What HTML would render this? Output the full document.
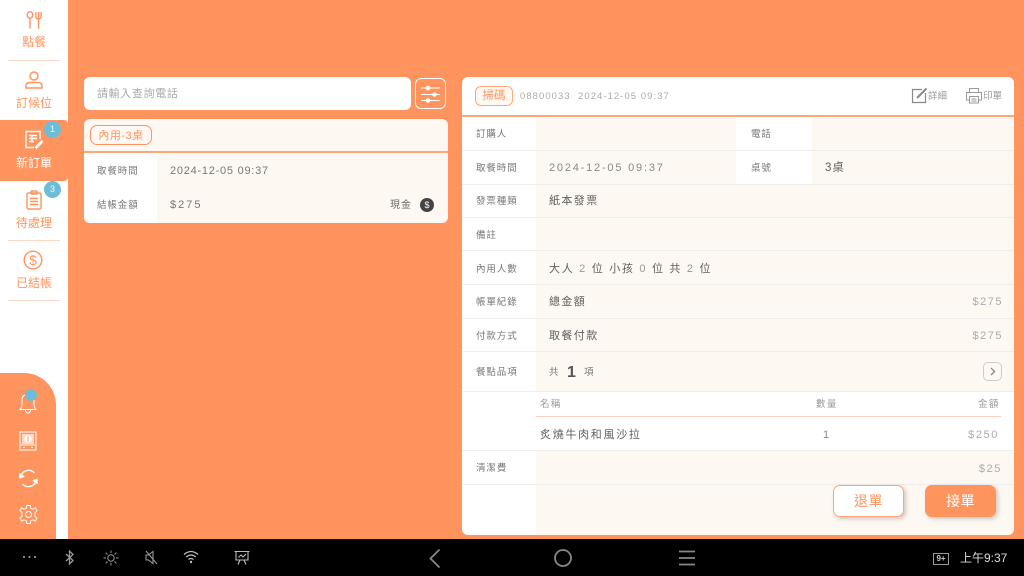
<!DOCTYPE html>
<html><head><meta charset="utf-8">
<style>
*{margin:0;padding:0;box-sizing:border-box}
html,body{width:1024px;height:576px;overflow:hidden;background:#ff945f}
body{position:relative;font-family:"Liberation Sans","Noto Sans CJK TC",sans-serif}
.a{position:absolute;white-space:nowrap}
.sep{position:absolute;left:8px;width:52px;height:1px;background:#fbd9c8}
.nav{position:absolute;left:0;width:68px;text-align:center;font-size:12px;color:#ff945f;line-height:18px}
.lb{position:absolute;left:476px;font-size:9.5px;color:#777;letter-spacing:.9px;line-height:14px;white-space:nowrap}
.v{position:absolute;font-size:11px;color:#5f5f5f;letter-spacing:1.4px;line-height:16px;white-space:nowrap}
.rl{position:absolute;left:462px;width:552px;height:1px;background:#f0eeec}
.badge{position:absolute;width:17px;height:17px;border-radius:50%;background:#6fbcd6;color:#dff;font-size:9px;text-align:center;line-height:17px}
svg{position:absolute;fill:none}
</style></head><body>
<!-- sidebar -->
<div class="a" style="left:0;top:0;width:68px;height:539px;background:#fff"></div>
<div class="a" style="left:0;top:120px;width:68px;height:61px;background:#ff945f;border-radius:0 4px 4px 0"></div>
<div class="a" style="left:0;top:373px;width:56px;height:166px;background:#ff945f;border-radius:0 32px 0 0"></div>
<svg style="left:26px;top:11px" width="17" height="18" viewBox="0 0 17 18" stroke="#ff945f" stroke-width="1.4"><ellipse cx="4" cy="4" rx="2.8" ry="3.3"/><path d="M4 7.300V17.500M9.800 1V5.500Q9.800 7.800 12.500 7.800Q15.200 7.800 15.200 5.500V1M12.500 1V17.500"/></svg>
<div class="nav" style="top:33px">點餐</div>
<div class="sep" style="top:60px"></div>
<svg style="left:24px;top:71px" width="20" height="18" viewBox="0 0 20 18" stroke="#ff945f" stroke-width="1.5"><circle cx="10" cy="5" r="4"/><path d="M2 17V15Q2 11.500 6 11.500H14Q18 11.500 18 15V17Z"/></svg>
<div class="nav" style="top:94px">訂候位</div>
<svg style="left:24px;top:130px" width="20" height="20" viewBox="0 0 20 20" stroke="#fff" stroke-width="1.400"><path d="M16 9V1.500H2V17.500H10"/><path d="M5 5.500H13M5 8.500H13M5 11.500H10M8 5.500V12.500"/><path d="M11.500 18L18.500 11" stroke-width="2.800"/></svg>
<div class="nav" style="top:154px;color:#fff">新訂單</div>
<div class="badge" style="left:44px;top:121px">1</div>
<svg style="left:25px;top:190px" width="18" height="20" viewBox="0 0 18 20" stroke="#ff945f" stroke-width="1.400"><rect x="2" y="3" width="14" height="16" rx="1.500"/><rect x="6" y="1" width="6" height="3" rx="1"/><path d="M5 8.500H13M5 11.500H13M5 14.500H13"/></svg>
<div class="nav" style="top:214px">待處理</div>
<div class="badge" style="left:44px;top:181px">3</div>
<div class="sep" style="top:240px"></div>
<svg style="left:23px;top:250px" width="20" height="20" viewBox="0 0 20 20" stroke="#ff945f" stroke-width="1.400"><circle cx="10" cy="10" r="8.800"/></svg>
<div class="a" style="left:23px;top:250px;width:20px;text-align:center;font-size:14px;line-height:20px;color:#ff945f">$</div>
<div class="nav" style="top:274px">已結帳</div>
<div class="sep" style="top:300px"></div>
<svg style="left:18px;top:391px" width="22" height="23" viewBox="0 0 22 23" stroke="#fff" stroke-width="1"><path d="M2 18.500H18Q16 16.500 16 12V9Q16 3.500 10 3.500Q4 3.500 4 9V12Q4 16.500 2 18.500ZM7.500 18.500Q7.500 22 10 22Q12.500 22 12.500 18.500"/></svg>
<div class="a" style="left:25px;top:389px;width:12px;height:12px;border-radius:50%;background:#6fbcd6"></div>
<svg style="left:19px;top:431px" width="18" height="20" viewBox="0 0 18 20" stroke="#fff" stroke-width="1"><rect x="1" y="1" width="16" height="18"/><rect x="3" y="3" width="12" height="10" fill="#ffd9c4" stroke="none"/><path d="M1 14H17M4 16.500H6M12 16.500H14"/><circle cx="9" cy="8" r="3.600" fill="#fff" stroke="none"/><path d="M9 5.500V10.500" stroke="#ff945f"/></svg>
<svg style="left:18px;top:468px" width="21" height="21" viewBox="0 0 21 21" stroke="#fff" stroke-width="1.400"><path d="M2.900 8A8 8 0 0 1 16.500 5M18.100 13A8 8 0 0 1 4.500 16"/><path d="M1.500 5L6.500 8.500L1.500 10.500Z M19.500 16L14.500 12.500L19.500 10.500Z" fill="#fff" stroke-width=".5"/></svg>
<svg style="left:18px;top:504px" width="21" height="21" viewBox="0 0 21 21" stroke="#fff" stroke-width="1"><circle cx="10.500" cy="10.500" r="3"/><path d="M8.800 1.500H12.200L12.800 4.300L15 5.200L17.400 3.800L19 6.800L17 8.700V12.300L19 14.200L17.400 17.200L15 15.800L12.800 16.700L12.200 19.500H8.800L8.200 16.700L6 15.800L3.600 17.200L2 14.200L4 12.300V8.700L2 6.800L3.600 3.800L6 5.200L8.200 4.300Z"/></svg>

<!-- left column -->
<div class="a" style="left:84px;top:77px;width:327px;height:33px;background:#fff;border-radius:6px;font-size:11px;line-height:34px;color:#aaa;padding-left:13px;letter-spacing:.65px">請輸入查詢電話</div>
<div class="a" style="left:415px;top:78px;width:31px;height:31px;border:1px solid #fff;border-radius:6px"></div>
<svg style="left:420px;top:85px" width="22" height="18" viewBox="0 0 22 18" stroke="#fff" stroke-width="1"><path d="M1 3H20M1 9.500H20M1 15.500H20"/><g fill="#fff"><circle cx="8" cy="3" r="1.800"/><circle cx="14.500" cy="9.500" r="1.800"/><circle cx="8" cy="15.500" r="1.800"/></g></svg>
<div class="a" style="left:84px;top:119px;width:364px;height:104px;background:#fef8f3;border-radius:6px;overflow:hidden">
  <div class="a" style="left:0;top:32px;width:364px;height:2px;background:#ffa57a"></div>
  <div class="a" style="left:0;top:34px;width:73px;height:70px;background:#fff"></div>
</div>
<div class="a" style="left:90px;top:125px;width:62px;height:20px;border:1px solid #ff945f;border-radius:7px;background:#fff8f3;font-size:11px;line-height:20px;color:#ff945f;text-align:center;letter-spacing:.5px">內用-3桌</div>
<div class="lb" style="left:97px;top:165px">取餐時間</div>
<div class="v" style="left:170px;top:163px;letter-spacing:.75px;color:#777">2024-12-05 09:37</div>
<div class="lb" style="left:97px;top:199px">結帳金額</div>
<div class="v" style="left:170px;top:197px;color:#777;letter-spacing:2px">$275</div>
<div class="a" style="left:390px;top:199px;font-size:10px;color:#666;line-height:14px;letter-spacing:1px">現金</div>
<div class="a" style="left:420px;top:198px;width:14px;height:14px;border-radius:50%;background:#444;color:#fff;font-size:9px;text-align:center;line-height:14px">$</div>

<!-- right panel -->
<div class="a" style="left:462px;top:77px;width:552px;height:458px;background:#fff;border-radius:6px;overflow:hidden">
  <div class="a" style="left:74px;top:40px;width:478px;height:274px;background:#fef8f3"></div>
  <div class="a" style="left:74px;top:373px;width:478px;height:85px;background:#fef8f3"></div>
  <div class="a" style="left:274px;top:40px;width:76px;height:67px;background:#fff"></div>
  <div class="a" style="left:0;top:38px;width:552px;height:2px;background:#ffa57a"></div>
</div>
<div class="rl" style="top:150px"></div><div class="rl" style="top:184px"></div><div class="rl" style="top:217px"></div><div class="rl" style="top:250px"></div><div class="rl" style="top:284px"></div><div class="rl" style="top:318px"></div><div class="rl" style="top:351px"></div><div class="rl" style="top:391px"></div><div class="rl" style="top:450px"></div><div class="rl" style="top:484px"></div>

<div class="a" style="left:475px;top:86px;width:38px;height:20px;border:1px solid #ffa57a;border-radius:6px;font-size:11.500px;line-height:19px;color:#ff945f;text-align:center;background:#fff8f3">掃碼</div>
<div class="a" style="left:520px;top:91px;font-size:9.500px;line-height:12px;color:#aaa;letter-spacing:1.050px">08800033&nbsp; 2024-12-05 09:37</div>
<svg style="left:911px;top:87px" width="17" height="17" viewBox="0 0 17 17" stroke="#888" stroke-width="1.200"><path d="M11 2.500H1.500V15.500H14.500V6"/><path d="M6 11L15.500 1.500" stroke-width="2"/></svg>
<div class="a" style="left:928px;top:90px;font-size:9.500px;line-height:14px;color:#999">詳細</div>
<svg style="left:965px;top:87px" width="18" height="17" viewBox="0 0 18 17" stroke="#999" stroke-width="1"><path d="M4.500 5V1.500H13.500V5M4.500 13H1.500V5.500H16.500V13H13.500"/><rect x="4.500" y="9.500" width="9" height="6.500"/><path d="M6.500 12H11.500M6.500 14H11.500"/></svg>
<div class="a" style="left:983px;top:90px;font-size:9.500px;line-height:14px;color:#999">印單</div>

<div class="lb" style="top:128px">訂購人</div>
<div class="lb" style="left:751px;top:128px">電話</div>
<div class="lb" style="top:162px">取餐時間</div>
<div class="v" style="left:549px;top:160px;color:#888;letter-spacing:1.800px">2024-12-05 09:37</div>
<div class="lb" style="left:751px;top:162px">桌號</div>
<div class="v" style="left:825px;top:160px;letter-spacing:1px;font-size:11.500px">3桌</div>
<div class="lb" style="top:195px">發票種類</div>
<div class="v" style="left:549px;top:193px">紙本發票</div>
<div class="lb" style="top:229px">備註</div>
<div class="lb" style="top:263px">內用人數</div>
<div class="v" style="left:549px;top:261px;letter-spacing:1.700px">大人 <span style="color:#999">2</span> 位 小孩 <span style="color:#999">0</span> 位 共 <span style="color:#999">2</span> 位</div>
<div class="lb" style="top:296px">帳單紀錄</div>
<div class="v" style="left:549px;top:294px">總金額</div>
<div class="v" style="right:21px;top:294px;color:#aaa;letter-spacing:1.500px">$275</div>
<div class="lb" style="top:330px">付款方式</div>
<div class="v" style="left:549px;top:328px">取餐付款</div>
<div class="v" style="right:21px;top:328px;color:#aaa;letter-spacing:1.500px">$275</div>
<div class="lb" style="top:366px">餐點品項</div>
<div class="a" style="left:549px;top:366px;font-size:9.500px;line-height:14px;color:#777">共</div>
<div class="a" style="left:567px;top:364px;font-size:16px;font-weight:bold;line-height:18px;color:#555">1</div>
<div class="a" style="left:584px;top:366px;font-size:9.500px;line-height:14px;color:#777">項</div>
<div class="a" style="left:983px;top:362px;width:19px;height:19px;border:1px solid #ccc;border-radius:5px"></div>
<svg style="left:983px;top:362px" width="19" height="19" viewBox="0 0 19 19" stroke="#888" stroke-width="1.300"><path d="M8 6L11.500 9.500L8 13"/></svg>

<div class="a" style="left:540px;top:398px;font-size:9.500px;line-height:14px;color:#999;letter-spacing:1.400px">名稱</div>
<div class="a" style="left:816px;top:398px;font-size:9.500px;line-height:14px;color:#999;letter-spacing:1.400px">數量</div>
<div class="a" style="left:978px;top:398px;font-size:9.500px;line-height:14px;color:#999;letter-spacing:1.400px">金額</div>
<div class="a" style="left:536px;top:416px;width:465px;height:1px;background:#fdd0bb"></div>
<div class="v" style="left:540px;top:427px;letter-spacing:1.700px">炙燒牛肉和風沙拉</div>
<div class="v" style="left:823px;top:427px;color:#888">1</div>
<div class="v" style="right:25px;top:427px;color:#aaa;letter-spacing:1.600px">$250</div>
<div class="lb" style="top:462px">清潔費</div>
<div class="v" style="right:22px;top:461px;color:#aaa;letter-spacing:1.600px">$25</div>
<div class="a" style="left:833px;top:485px;width:71px;height:32px;background:#fff;border:1px solid #ffa57a;border-radius:7px;box-shadow:2px 2px 4px rgba(120,110,100,.35);font-size:14px;line-height:30px;color:#ff945f;text-align:center;letter-spacing:.5px">退單</div>
<div class="a" style="left:925px;top:485px;width:71px;height:32px;background:#ff945f;border-radius:7px;box-shadow:2px 2px 4px rgba(120,110,100,.35);font-size:14px;line-height:32px;color:#fff;text-align:center;letter-spacing:.5px">接單</div>

<!-- system bar -->
<div class="a" style="left:0;top:539px;width:1024px;height:37px;background:#000"></div>
<svg style="left:22px;top:555px" width="16" height="4" viewBox="0 0 16 4"><circle cx="2" cy="2" r="1" fill="#aaa"/><circle cx="7.500" cy="2" r="1" fill="#aaa"/><circle cx="13" cy="2" r="1" fill="#aaa"/></svg>
<svg style="left:64px;top:550px" width="12" height="15" viewBox="0 0 12 15" stroke="#999" stroke-width="1.300"><path d="M2 4L9 10.500L5.500 14V1L9 4.500L2 11"/></svg>
<svg style="left:103px;top:550px" width="16" height="16" viewBox="0 0 16 16" stroke="#999" stroke-width="1"><circle cx="8" cy="8" r="3.200"/><path d="M8 0.500V3M8 13V15.500M0.500 8H3M13 8H15.500M2.700 2.700L4.500 4.500M11.500 11.500L13.300 13.300M2.700 13.300L4.500 11.500M11.500 4.500L13.300 2.700"/></svg>
<svg style="left:145px;top:550px" width="13" height="15" viewBox="0 0 13 15" stroke="#999" stroke-width="1.100"><path d="M1 5V10H3.500L8 13.500V1.500L3.500 5ZM1 1L12 14"/></svg>
<svg style="left:183px;top:550px" width="16" height="14" viewBox="0 0 16 14" stroke="#bbb" stroke-width="1.200"><path d="M1 4.500Q8 -1.500 15 4.500M3.200 7Q8 3 12.800 7M5.500 9.500Q8 7.500 10.500 9.500"/><circle cx="8" cy="12" r="1.200" fill="#bbb" stroke="none"/></svg>
<svg style="left:234px;top:550px" width="16" height="15" viewBox="0 0 16 15" stroke="#bbb" stroke-width="1.100"><path d="M0.500 1.500H15.500M2 1.500V10H14V1.500M4 14.500L6 10M12 14.500L10 10M4.500 7.500L7 5L9 7L12 4"/></svg>
<svg style="left:428px;top:548px" width="14" height="21" viewBox="0 0 14 21" stroke="#888" stroke-width="1.800"><path d="M11.500 1.500L2.500 10.500L11.500 19.500"/></svg>
<svg style="left:553px;top:548px" width="20" height="20" viewBox="0 0 20 20" stroke="#888" stroke-width="1.800"><circle cx="10" cy="10" r="8"/></svg>
<svg style="left:679px;top:550px" width="16" height="16" viewBox="0 0 16 16" stroke="#888" stroke-width="1.800"><path d="M0 1.500H16M0 8H16M0 14.500H16"/></svg>
<div class="a" style="left:933px;top:553px;width:16px;height:12px;border:1px solid #999;font-size:8px;line-height:10px;color:#ccc;text-align:center;font-weight:bold">9+</div>
<div class="a" style="left:960px;top:551px;font-size:12px;line-height:15px;color:#ddd">上午9:37</div>
</body></html>
